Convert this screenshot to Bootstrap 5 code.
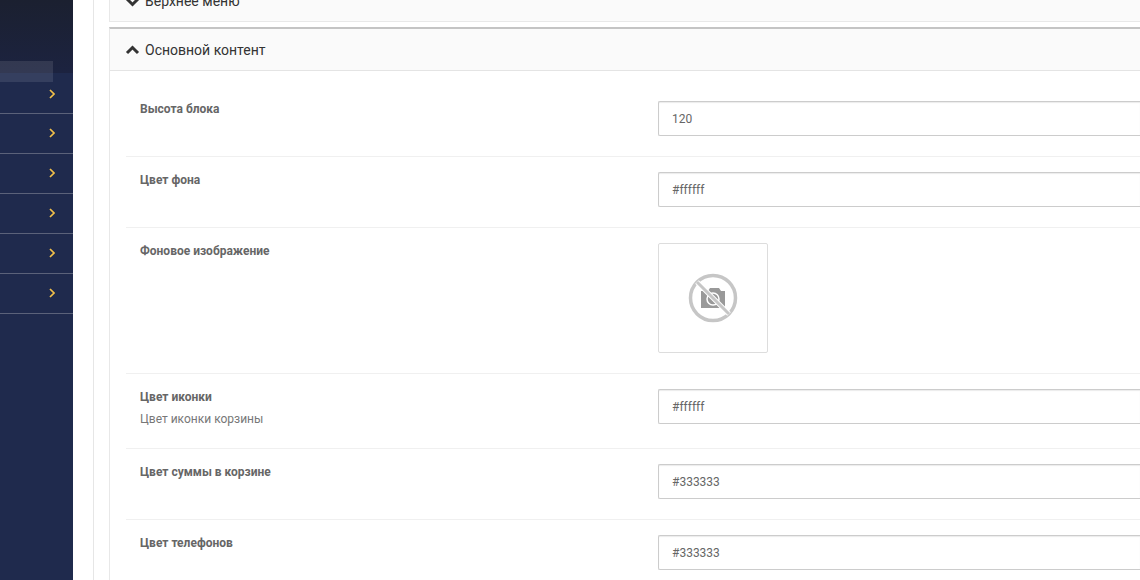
<!DOCTYPE html>
<html lang="ru"><head><meta charset="utf-8"><title>Настройки</title>
<link href="https://cdn.jsdelivr.net/npm/bootstrap@5.3.0/dist/css/bootstrap.min.css" rel="stylesheet">
<style>
html,body{height:580px;overflow:hidden;background:#fff}
body{font-family:Roboto,"Liberation Sans",sans-serif;font-size:12px;color:#666}
.shell{width:1140px;height:580px;overflow:hidden}
.side{width:73px;background:#1f2a4d;flex:none;position:relative}
.side-top{height:73px;background:linear-gradient(180deg,#1b2030,#1c2340)}
.side-hl{position:absolute;left:0;top:61px;width:53px;height:21px;background:rgba(255,255,255,.1)}
.side-item{height:40px;border-bottom:1px solid #5b627a;padding-right:18px;padding-bottom:1px}
.side-top + .side-hl + .side-item{height:41px;padding-bottom:0;padding-top:1px}
.side-item svg{display:block}
.main-col{margin-left:20px;border-left:1px solid #e6e6e6;padding-left:15px;flex:1;min-width:0}
.pane{border:1px solid #e8e8e8;border-right:0;background:#fff}
.pane-closed{height:23px;margin-top:-1px;background:#fafafa;overflow:hidden;margin-bottom:5px;border-top:0}
.pane-open{border-top:2px solid #c4c4c4}
.pane-head{height:42px;background:#fafafa;border-bottom:1px solid #e4e4e4;padding-left:15px;padding-top:1px;font-size:14px;color:#333;gap:5px}
.pane-head svg{flex:none}
.pane-closed .pane-head{height:22px;border:0;align-items:flex-end!important;padding-bottom:9px}
.pane-closed .pane-head svg{margin-bottom:5px}
.pane-body{padding:15px 0 0 16px}
.frow{border-bottom:1px solid #f0f0f0;padding:15px 0 20px 14px}
.frow:last-child{border:0}
.flabel{width:518px;flex:none}
.flabel b{display:block;font-weight:700;font-size:12px;line-height:16px;color:#666}
.fhint{display:block;margin-top:6px;line-height:17px;font-size:12px;color:#777}
.finput{height:35px;border:1px solid #ccc;border-right:0;border-radius:2px 0 0 2px;padding:0 13px;font-size:12px;color:#666;box-shadow:inset 0 1px 1px rgba(0,0,0,.08)}
.thumb{width:110px;height:110px;border:1px solid #ddd;border-radius:2px}
</style></head>
<body>
<div class="shell d-flex">
<aside class="side">
 <div class="side-top"></div><div class="side-hl"></div>
 <div class="side-item d-flex align-items-center justify-content-end"><svg width="6" height="10" viewBox="0 0 6 10"><path d="M1 1l4 4-4 4" fill="none" stroke="#f2c04a" stroke-width="1.7"/></svg></div>
 <div class="side-item d-flex align-items-center justify-content-end"><svg width="6" height="10" viewBox="0 0 6 10"><path d="M1 1l4 4-4 4" fill="none" stroke="#f2c04a" stroke-width="1.7"/></svg></div>
 <div class="side-item d-flex align-items-center justify-content-end"><svg width="6" height="10" viewBox="0 0 6 10"><path d="M1 1l4 4-4 4" fill="none" stroke="#f2c04a" stroke-width="1.7"/></svg></div>
 <div class="side-item d-flex align-items-center justify-content-end"><svg width="6" height="10" viewBox="0 0 6 10"><path d="M1 1l4 4-4 4" fill="none" stroke="#f2c04a" stroke-width="1.7"/></svg></div>
 <div class="side-item d-flex align-items-center justify-content-end"><svg width="6" height="10" viewBox="0 0 6 10"><path d="M1 1l4 4-4 4" fill="none" stroke="#f2c04a" stroke-width="1.7"/></svg></div>
 <div class="side-item d-flex align-items-center justify-content-end"><svg width="6" height="10" viewBox="0 0 6 10"><path d="M1 1l4 4-4 4" fill="none" stroke="#f2c04a" stroke-width="1.7"/></svg></div>
</aside>
<main class="main-col">
 <section class="pane pane-closed">
  <div class="pane-head d-flex align-items-center"><svg width="15" height="10" viewBox="0 0 15 10"><path d="M2 2l5.500 5.500L13 2" fill="none" stroke="#333" stroke-width="3"/></svg><span>Верхнее меню</span></div>
 </section>
 <section class="pane pane-open">
  <div class="pane-head d-flex align-items-center"><svg width="15" height="10" viewBox="0 0 15 10"><path d="M2 8l5.500-5.500L13 8" fill="none" stroke="#333" stroke-width="3"/></svg><span>Основной контент</span></div>
  <div class="pane-body">
   <div class="frow d-flex"><div class="flabel"><b>Высота блока</b></div><div class="flex-grow-1"><div class="finput d-flex align-items-center">120</div></div></div>
   <div class="frow d-flex"><div class="flabel"><b>Цвет фона</b></div><div class="flex-grow-1"><div class="finput d-flex align-items-center">#ffffff</div></div></div>
   <div class="frow d-flex"><div class="flabel"><b>Фоновое изображение</b></div><div class="flex-grow-1"><div class="thumb d-flex align-items-center justify-content-center">
    <svg width="50" height="50" viewBox="0 0 50 50"><path d="M13 18h7l2-3h9l2 3h4v17H13z" fill="#999"/><circle cx="25" cy="26" r="6" fill="none" stroke="#fff" stroke-width="1.500"/><circle cx="25" cy="25" r="22.500" fill="none" stroke="#c6c6c6" stroke-width="3.500"/><path d="M9 9l32 32" stroke="#fff" stroke-width="5"/><path d="M9 9l32 32" stroke="#c6c6c6" stroke-width="3"/></svg>
   </div></div></div>
   <div class="frow d-flex"><div class="flabel"><b>Цвет иконки</b><span class="fhint">Цвет иконки корзины</span></div><div class="flex-grow-1"><div class="finput d-flex align-items-center">#ffffff</div></div></div>
   <div class="frow d-flex"><div class="flabel"><b>Цвет суммы в корзине</b></div><div class="flex-grow-1"><div class="finput d-flex align-items-center">#333333</div></div></div>
   <div class="frow d-flex"><div class="flabel"><b>Цвет телефонов</b></div><div class="flex-grow-1"><div class="finput d-flex align-items-center">#333333</div></div></div>
  </div>
 </section>
</main>
</div>
<script src="https://cdn.jsdelivr.net/npm/bootstrap@5.3.0/dist/js/bootstrap.bundle.min.js"></script>
</body></html>
